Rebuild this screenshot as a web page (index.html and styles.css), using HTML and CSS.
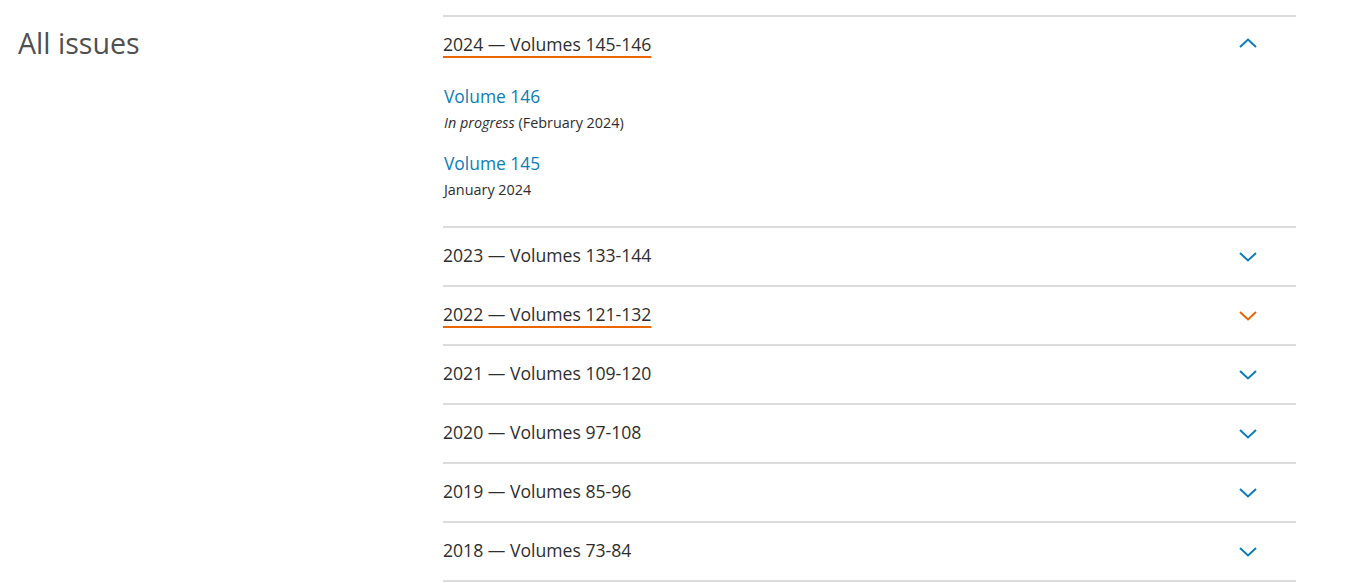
FILE: index.html
```html
<!DOCTYPE html>
<html lang="en">
<head>
<meta charset="utf-8">
<title>All issues</title>
<link rel="stylesheet" href="styles.css">
</head>
<body>
<div class="page">
  <h2 class="title">All issues</h2>
  <ul class="accordion">
    <li class="item open">
      <div class="head">
        <span class="label underline">2024 — Volumes 145-146</span>
        <svg class="chev up" width="18" height="10" viewBox="0 0 18 10"><path d="M1 9 L9 1.5 L17 9" fill="none" stroke="currentColor" stroke-width="2"/></svg>
      </div>
      <div class="volumes">
        <div class="vol">
          <a class="vol-link" href="#">Volume 146</a>
          <div class="vol-sub"><em>In progress</em> (February 2024)</div>
        </div>
        <div class="vol">
          <a class="vol-link" href="#">Volume 145</a>
          <div class="vol-sub">January 2024</div>
        </div>
      </div>
    </li>
    <li class="item">
      <div class="head">
        <span class="label">2023 — Volumes 133-144</span>
        <svg class="chev" width="18" height="10" viewBox="0 0 18 10"><path d="M1 1 L9 8.5 L17 1" fill="none" stroke="currentColor" stroke-width="2"/></svg>
      </div>
    </li>
    <li class="item hover">
      <div class="head">
        <span class="label underline">2022 — Volumes 121-132</span>
        <svg class="chev" width="18" height="10" viewBox="0 0 18 10"><path d="M1 1 L9 8.5 L17 1" fill="none" stroke="currentColor" stroke-width="2"/></svg>
      </div>
    </li>
    <li class="item">
      <div class="head">
        <span class="label">2021 — Volumes 109-120</span>
        <svg class="chev" width="18" height="10" viewBox="0 0 18 10"><path d="M1 1 L9 8.5 L17 1" fill="none" stroke="currentColor" stroke-width="2"/></svg>
      </div>
    </li>
    <li class="item">
      <div class="head">
        <span class="label">2020 — Volumes 97-108</span>
        <svg class="chev" width="18" height="10" viewBox="0 0 18 10"><path d="M1 1 L9 8.5 L17 1" fill="none" stroke="currentColor" stroke-width="2"/></svg>
      </div>
    </li>
    <li class="item">
      <div class="head">
        <span class="label">2019 — Volumes 85-96</span>
        <svg class="chev" width="18" height="10" viewBox="0 0 18 10"><path d="M1 1 L9 8.5 L17 1" fill="none" stroke="currentColor" stroke-width="2"/></svg>
      </div>
    </li>
    <li class="item">
      <div class="head">
        <span class="label">2018 — Volumes 73-84</span>
        <svg class="chev" width="18" height="10" viewBox="0 0 18 10"><path d="M1 1 L9 8.5 L17 1" fill="none" stroke="currentColor" stroke-width="2"/></svg>
      </div>
    </li>
  </ul>
</div>
</body>
</html>
```

FILE: styles.css
```css
html, body {
  margin: 0;
  padding: 0;
  background: #ffffff;
}
body {
  font-family: "Open Sans", "Liberation Sans", sans-serif;
  color: #2e2e2e;
}
.page {
  display: grid;
  grid-template-columns: 425px 853px;
  padding: 15px 0 0 18px;
}
.title {
  margin: 0;
  padding-top: 9px;
  font-size: 28.6px;
  font-weight: 400;
  line-height: 38px;
  color: #505050;
}
.accordion {
  list-style: none;
  margin: 0;
  padding: 0;
  border-top: 2px solid #dcdcdc;
}
.item {
  border-bottom: 2px solid #dcdcdc;
}
.head {
  height: 57px;
  display: flex;
  align-items: center;
  justify-content: space-between;
  padding-right: 39px;
}
.label {
  font-size: 17.6px;
  line-height: 24px;
  margin-top: -3px;
  color: #2e2e2e;
}
.underline {
  text-decoration: underline;
  text-decoration-color: #eb6500;
  text-decoration-thickness: 2px;
  text-underline-offset: 5px;
}
.chev {
  color: #0c7dbb;
  display: block;
}
.chev.up {
  margin-top: -5px;
}
.hover .chev {
  color: #eb6500;
}
.volumes {
  padding: 10px 0 26px 1px;
}
.vol + .vol {
  margin-top: 18px;
}
.vol-link {
  display: block;
  font-size: 17.4px;
  line-height: 24px;
  color: #0c7dbb;
  text-decoration: none;
}
.vol-sub {
  margin-top: 5px;
  font-size: 14.4px;
  line-height: 20px;
  color: #2e2e2e;
}
```
